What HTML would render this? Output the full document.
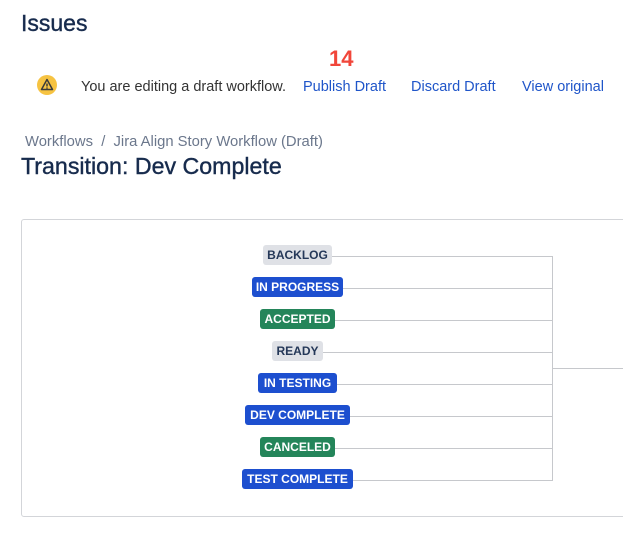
<!DOCTYPE html>
<html><head><style>
body{margin:0;width:623px;height:536px;background:#fff;font-family:"Liberation Sans",sans-serif;position:relative;overflow:hidden}
.a{position:absolute;white-space:nowrap}
.l{position:absolute;height:20px;line-height:20px;border-radius:3px;font-size:12px;font-weight:bold;text-align:center;color:#fff}
.g{background:#dfe1e6;color:#253858}.b{background:#1d4fcf}.gr{background:#24855a}
.h{position:absolute;height:1px;background:#c6c8cc}
.hd{-webkit-text-stroke:0.4px #172b4d}
</style></head><body>
<div class="a hd" style="left:21px;top:10px;font-size:23px;color:#172b4d">Issues</div>
<div class="a" style="left:329px;top:46px;font-size:22px;font-weight:bold;color:#f1463a">14</div>
<svg class="a" style="left:37px;top:75px" width="20" height="20" viewBox="0 0 20 20"><circle cx="10" cy="10" r="10" fill="#f6c342"/><path d="M10 4.5 L15.5 14.5 H4.5 Z" fill="none" stroke="#3a3a3a" stroke-width="1.5" stroke-linejoin="round"/><path d="M10 8.5v3" stroke="#3a3a3a" stroke-width="1.5"/><circle cx="10" cy="13" r=".8" fill="#3a3a3a"/></svg>
<div class="a" style="left:81px;top:79px;font-size:14.5px;color:#333">You are editing a draft workflow.</div>
<div class="a" style="left:303px;top:79px;font-size:14.5px;color:#1f55c9">Publish Draft</div>
<div class="a" style="left:411px;top:79px;font-size:14.5px;color:#1f55c9">Discard Draft</div>
<div class="a" style="left:522px;top:79px;font-size:14.5px;color:#1f55c9">View original</div>
<div class="a" style="left:25px;top:134px;font-size:14.8px;color:#6b778c">Workflows &nbsp;/ &nbsp;Jira Align Story Workflow (Draft)</div>
<div class="a hd" style="left:21px;top:153px;font-size:23.2px;color:#172b4d">Transition: Dev Complete</div>
<div class="a" style="left:21px;top:219px;width:620px;height:296px;border:1px solid #d3d5d9;border-radius:3px"></div>
<div class="a" style="left:552px;top:256px;width:1px;height:225px;background:#c6c8cc"></div>
<div class="h" style="left:552px;top:368px;width:71px"></div>
<div class="h" style="left:332px;top:256px;width:220px"></div><div class="l g" style="left:263px;top:245px;width:69px">BACKLOG</div>
<div class="h" style="left:343px;top:288px;width:209px"></div><div class="l b" style="left:252px;top:277px;width:91px">IN PROGRESS</div>
<div class="h" style="left:335px;top:320px;width:217px"></div><div class="l gr" style="left:260px;top:309px;width:75px">ACCEPTED</div>
<div class="h" style="left:323px;top:352px;width:229px"></div><div class="l g" style="left:272px;top:341px;width:51px">READY</div>
<div class="h" style="left:337px;top:384px;width:215px"></div><div class="l b" style="left:258px;top:373px;width:79px">IN TESTING</div>
<div class="h" style="left:350px;top:416px;width:202px"></div><div class="l b" style="left:245px;top:405px;width:105px">DEV COMPLETE</div>
<div class="h" style="left:335px;top:448px;width:217px"></div><div class="l gr" style="left:260px;top:437px;width:75px">CANCELED</div>
<div class="h" style="left:353px;top:480px;width:199px"></div><div class="l b" style="left:242px;top:469px;width:111px">TEST COMPLETE</div>
</body></html>
